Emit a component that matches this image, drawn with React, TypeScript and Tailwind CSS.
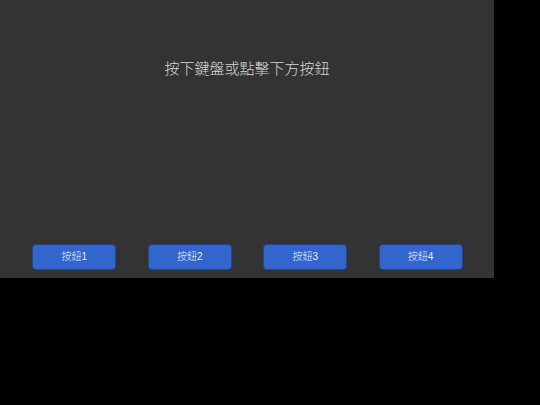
export default function App() {
  const buttons = ["按鈕1", "按鈕2", "按鈕3", "按鈕4"];

  return (
    <div className="w-[540px] h-[405px] bg-black">
      <div
        className="w-[494px] h-[278px] bg-[#333333] flex flex-col"
        style={{ fontFamily: '"Liberation Sans", "Noto Sans CJK TC", sans-serif' }}
      >
        <div className="pt-[58px] text-center text-[15px] leading-[22px] font-light text-[#d8d8d8]">
          按下鍵盤或點擊下方按鈕
        </div>
        <div className="flex-1" />
        <div className="flex justify-evenly pb-[8px] pl-[1px]">
          {buttons.map((label) => (
            <button
              key={label}
              className="w-[84px] h-[26px] rounded-[4px] bg-[#3366cc] border border-[#24468e] text-[#e8eefa] text-[10px] font-light leading-none"
            >
              {label}
            </button>
          ))}
        </div>
      </div>
    </div>
  );
}
